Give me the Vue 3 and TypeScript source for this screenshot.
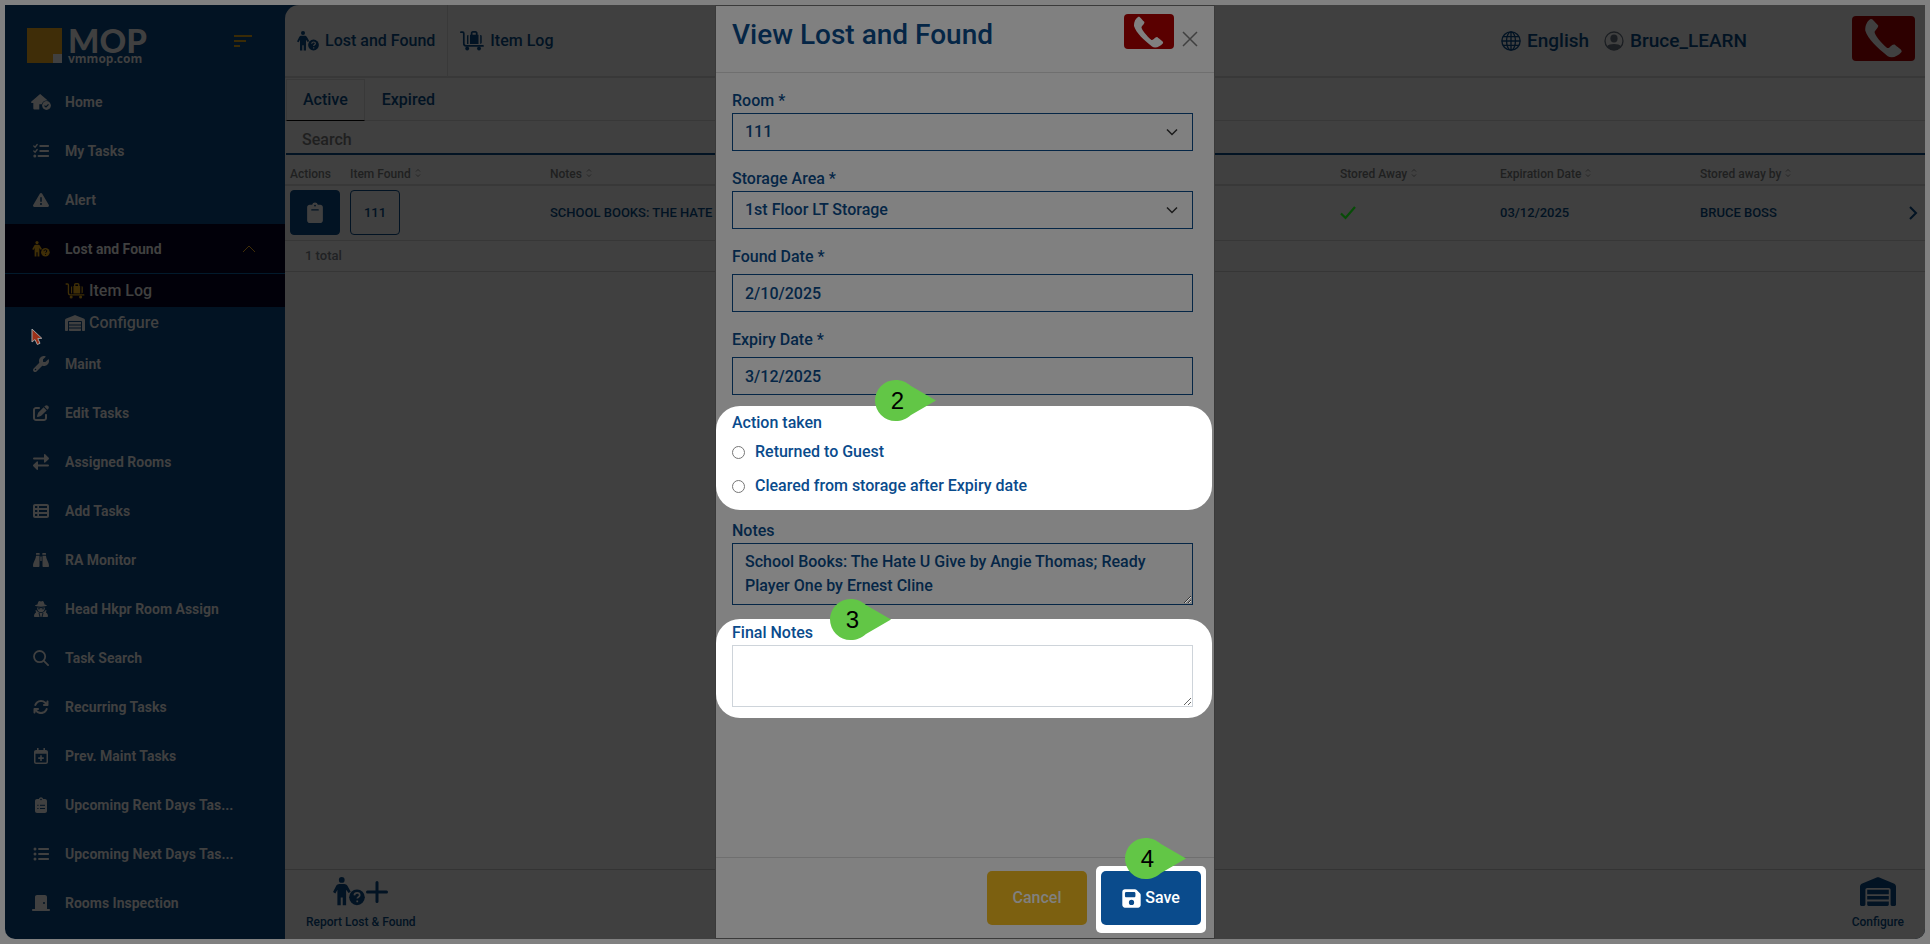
<script setup lang="ts">
import { ref } from 'vue'

interface NavItem {
  label: string
  icon: string
}

const navTop: NavItem[] = [
  { label: 'Home', icon: 'home' },
  { label: 'My Tasks', icon: 'checks' },
  { label: 'Alert', icon: 'alert' },
]

const navRest: NavItem[] = [
  { label: 'Maint', icon: 'wrench' },
  { label: 'Edit Tasks', icon: 'edit' },
  { label: 'Assigned Rooms', icon: 'swap' },
  { label: 'Add Tasks', icon: 'table' },
  { label: 'RA Monitor', icon: 'binoculars' },
  { label: 'Head Hkpr Room Assign', icon: 'agent' },
  { label: 'Task Search', icon: 'search' },
  { label: 'Recurring Tasks', icon: 'rotate' },
  { label: 'Prev. Maint Tasks', icon: 'calendar' },
  { label: 'Upcoming Rent Days Tas...', icon: 'clipboard-list' },
  { label: 'Upcoming Next Days Tas...', icon: 'list' },
  { label: 'Rooms Inspection', icon: 'door' },
]

const room = ref('111')
const storage = ref('1st Floor LT Storage')
const foundDate = ref('2/10/2025')
const expiryDate = ref('3/12/2025')
const action = ref('')
const notes = ref('School Books: The Hate U Give by Angie Thomas; Ready Player One by Ernest Cline')
const finalNotes = ref('')
const search = ref('')
</script>

<template>
  <svg class="sprite" aria-hidden="true">
    <symbol id="i-home" viewBox="0 0 20 16">
      <path d="M8.500.400a1 1 0 0 1 1.300 0l7 6.200c-2.800-.6-5.300 1-6 3.600H8.300v5.300H3.300a1 1 0 0 1-1-1V9H1A1 1 0 0 1 .400 7.400z" />
      <circle cx="15.500" cy="11.500" r="4.400" />
      <path d="m13.500 11.600 1.500 1.400 2.500-2.700" fill="none" stroke="var(--cut)" stroke-width="1.200" />
    </symbol>
    <symbol id="i-checks" viewBox="0 0 16 16">
      <g fill="none" stroke="currentColor" stroke-linecap="round">
        <path d="M7.200 3h8M7.200 8h8M5.500 13h9.700" stroke-width="1.900" />
        <path d="m.8 3 1.300 1.200L4.200 1.500M.8 8l1.300 1.200L4.200 6.500" stroke-width="1.300" />
      </g>
      <circle cx="1.800" cy="13" r="1.500" />
    </symbol>
    <symbol id="i-alert" viewBox="0 0 512 512">
      <path d="M256 32c14.200 0 27.300 7.500 34.500 19.800l216 368c7.300 12.400 7.300 27.700 .2 40.100S486.300 480 472 480L40 480c-14.300 0-27.600-7.700-34.700-20.100s-7-27.800 .2-40.100l216-368C228.700 39.500 241.800 32 256 32zm0 128c-13.300 0-24 10.700-24 24l0 112c0 13.300 10.700 24 24 24s24-10.700 24-24l0-112c0-13.300-10.700-24-24-24zm32 224a32 32 0 1 0 -64 0 32 32 0 1 0 64 0z" />
    </symbol>
    <symbol id="i-person" viewBox="0 0 22 20">
      <circle cx="6" cy="2" r="2" />
      <path d="M4.300 4.800h3.400c1 0 1.700.5 2.200 1.300l2.300 4-1.500 1-1.700-2.300v10.700H6.700v-5.300H5.300v5.300H3V8.800l-1.400 2.500L0 10.400l2.200-4.300c.5-.8 1.200-1.300 2.100-1.300z" />
      <circle cx="16.500" cy="14" r="5.400" />
      <path d="M14.700 12.700c.1-1.200 1-1.700 1.900-1.700 1 0 1.800.6 1.800 1.500 0 1.300-1.700 1.200-1.700 2.400M16.700 16.200v1.200" fill="none" stroke="var(--cut)" stroke-width="1.200" />
    </symbol>
    <symbol id="i-cart" viewBox="0 0 24 20">
      <path d="M.9 1.200h1.700c.8 0 1.200.5 1.200 1.200v10.200c0 1.500.7 2.300 2.200 2.300h17" fill="none" stroke="currentColor" stroke-width="1.700" stroke-linecap="round" />
      <circle cx="7.200" cy="17.500" r="1.900" />
      <circle cx="19" cy="17.500" r="1.900" />
      <path d="M7 5.200C7 4.400 7.500 4 8.400 4v9H7.600c-.4 0-.6-.3-.6-.6zM20.200 4c.9 0 1.500.5 1.500 1.300v6.300c0 .9-.6 1.400-1.500 1.400z" />
      <path fill-rule="evenodd" d="M10 3.800h.8V2.200C10.800 1 11.600 0 12.900 0h2.500c1.300 0 2.200 1 2.200 2.200v1.600h.9V13H10zM12.500 3.800h3.300v-2h-3.300z" />
    </symbol>
    <symbol id="i-warehouse" viewBox="0 0 640 512">
      <path d="M0 488L0 171.300c0-26.200 15.900-49.700 40.200-59.400L308.100 4.800c7.600-3.100 16.100-3.100 23.800 0L599.800 111.900c24.300 9.700 40.200 33.300 40.200 59.400L640 488c0 13.300-10.700 24-24 24l-48 0c-13.300 0-24-10.700-24-24l0-264c0-17.700-14.300-32-32-32l-384 0c-17.700 0-32 14.300-32 32l0 264c0 13.300-10.700 24-24 24l-48 0c-13.300 0-24-10.700-24-24zm488 24l-336 0c-13.300 0-24-10.700-24-24l0-56 384 0 0 56c0 13.300-10.700 24-24 24zM128 400l0-64 384 0 0 64-384 0zm0-96l0-80 384 0 0 80-384 0z" />
    </symbol>
    <symbol id="i-wrench" viewBox="0 0 512 512">
      <path d="M352 320c88.400 0 160-71.600 160-160c0-15.300-2.200-30.100-6.200-44.200c-3.100-10.800-16.400-13.200-24.300-5.300l-76.800 76.800c-3 3-7.100 4.700-11.300 4.700L336 192c-8.800 0-16-7.200-16-16l0-57.400c0-4.200 1.700-8.300 4.700-11.300l76.800-76.800c7.900-7.900 5.400-21.200-5.300-24.300C382.100 2.200 367.300 0 352 0C263.600 0 192 71.600 192 160c0 19.100 3.400 37.500 9.500 54.500L19.900 396.100C7.200 408.800 0 426.100 0 444.100C0 481.600 30.400 512 67.900 512c18 0 35.300-7.200 48-19.900L297.500 310.500c17 6.200 35.400 9.500 54.500 9.500zM80 408a24 24 0 1 1 0 48 24 24 0 1 1 0-48z" />
    </symbol>
    <symbol id="i-edit" viewBox="0 0 512 512">
      <path d="M471.600 21.700c-21.900-21.900-57.300-21.900-79.200 0L362.300 51.700l97.900 97.900 30.100-30.100c21.900-21.900 21.900-57.300 0-79.200L471.600 21.700zm-299.200 220c-6.100 6.100-10.800 13.600-13.500 21.900l-29.600 88.800c-2.900 8.600-.6 18.100 5.800 24.600s15.900 8.700 24.600 5.800l88.800-29.600c8.200-2.700 15.700-7.400 21.900-13.500L437.700 172.300 339.700 74.300 172.400 241.700zM96 64C43 64 0 107 0 160L0 416c0 53 43 96 96 96l256 0c53 0 96-43 96-96l0-96c0-17.700-14.300-32-32-32s-32 14.300-32 32l0 96c0 17.700-14.300 32-32 32L96 448c-17.700 0-32-14.300-32-32l0-256c0-17.700 14.300-32 32-32l96 0c17.700 0 32-14.300 32-32s-14.300-32-32-32L96 64z" />
    </symbol>
    <symbol id="i-swap" viewBox="0 0 16 16">
      <path d="M1 4.500h10M5 11.500h10" fill="none" stroke="currentColor" stroke-width="2" stroke-linecap="round" />
      <path d="M11 .8c0-.7.700-.9 1.200-.5l3.500 3.500c.4.400.4 1 0 1.400l-3.500 3.400c-.5.400-1.200.2-1.200-.5zM5 15.200c0 .7-.7.900-1.200.5L.3 12.200a1 1 0 0 1 0-1.400l3.500-3.400c.5-.4 1.200-.2 1.200.5z" />
    </symbol>
    <symbol id="i-table" viewBox="0 0 16 16">
      <path fill-rule="evenodd" d="M2 1h12c1.100 0 2 .9 2 2v10c0 1.100-.9 2-2 2H2c-1.100 0-2-.9-2-2V3c0-1.100.9-2 2-2zm0 2v2h2.300V3zm4 0v2h8V3zM2 7v2h2.300V7zm4 0v2h8V7zm-4 4v2h2.300v-2zm4 0v2h8v-2z" />
    </symbol>
    <symbol id="i-binoculars" viewBox="0 0 16 16">
      <path d="M3.500 1h2.700c.3 0 .5.200.5.500v1.200H3V1.500c0-.3.200-.5.500-.5zm6.300 0h2.700c.3 0 .5.200.5.500v1.200H9.300V1.500c0-.3.200-.5.500-.5zM3 3.700h3.500V14c0 .6-.4 1-1 1H1c-.6 0-1-.4-1-1 0-4 2.700-6 3-10.300zm6.500 0H13c.3 4.300 3 6.300 3 10.300 0 .6-.4 1-1 1h-4.500c-.6 0-1-.4-1-1zM7.300 4.500h1.400V9H7.300z" />
    </symbol>
    <symbol id="i-agent" viewBox="0 0 14 16">
      <path d="M3.400 3.600C3.800 1.700 4.600 0 5.400 0c.6 0 1 .5 1.600.5S8 0 8.600 0c.8 0 1.600 1.700 2 3.600 1.300.3 2.400.6 2.400 1s-2.600 1.100-6 1.100-6-.6-6-1.100.9-.7 2.400-1z" />
      <path d="M3.200 6.500c2.300.6 5.300.6 7.600 0v1c0 2.200-1.700 3.700-3.800 3.700S3.200 9.700 3.200 7.500z" />
      <path d="M1.400 9.300h1.300c.6 1.500 2 2.600 4.300 2.600s3.700-1.100 4.300-2.600h1.300l-.7 2.200c1.300.6 2.100 2 2.100 3.500 0 .6-.4 1-1 1H1c-.6 0-1-.4-1-1 0-1.500.8-2.900 2.100-3.500z" />
      <path d="M4 7.800h2.300M7.700 7.800H10M5 12l1 4M9 12l-1 4" fill="none" stroke="var(--cut)" stroke-width=".9" />
    </symbol>
    <symbol id="i-search" viewBox="0 0 16 16">
      <g fill="none" stroke="currentColor" stroke-width="1.800" stroke-linecap="round">
        <circle cx="6.600" cy="6.600" r="5.600" />
        <path d="m10.800 10.800 4.300 4.300" />
      </g>
    </symbol>
    <symbol id="i-rotate" viewBox="0 0 512 512">
      <path d="M105.100 202.600c7.700-21.800 20.200-42.300 37.800-59.800c62.500-62.500 163.800-62.500 226.300 0L386.300 160 352 160c-17.700 0-32 14.300-32 32s14.300 32 32 32l111.500 0l.4 0c17.700 0 32-14.300 32-32l0-112c0-17.700-14.300-32-32-32s-32 14.300-32 32l0 35.200L414.400 97.600c-87.500-87.500-229.300-87.500-316.800 0C73.200 122 55.600 150.700 44.800 181.400c-5.900 16.700 2.900 34.900 19.500 40.800s34.900-2.900 40.800-19.500zM39 289.300c-5 1.500-9.800 4.200-13.700 8.200c-4 4-6.700 8.800-8.100 14c-.3 1.200-.6 2.500-.8 3.800c-.3 1.700-.4 3.400-.4 5.100L16 432c0 17.700 14.300 32 32 32s32-14.300 32-32l0-35.100 17.600 17.500c87.500 87.400 229.300 87.400 316.700 0c24.400-24.400 42.100-53.100 52.900-83.800c5.900-16.700-2.900-34.900-19.500-40.800s-34.900 2.900-40.800 19.500c-7.700 21.800-20.200 42.300-37.800 59.800c-62.500 62.500-163.800 62.500-226.300 0l-.1-.1L125.600 352l34.400 0c17.700 0 32-14.300 32-32s-14.300-32-32-32L48.400 288c-1.600 0-3.200 .1-4.800 .3s-3.100 .5-4.600 1z" />
    </symbol>
    <symbol id="i-calendar" viewBox="0 0 16 16">
      <path fill-rule="evenodd" d="M4 0h1.600v2h4.800V0H12v2h1c1.100 0 2 .9 2 2v10c0 1.100-.9 2-2 2H3c-1.100 0-2-.9-2-2V4c0-1.100.9-2 2-2h1zM2.500 5.800V14c0 .3.200.5.500.5h10c.3 0 .5-.2.500-.5V5.800z" />
      <path d="M8 7.300v5.600M5.200 10.100h5.600" fill="none" stroke="currentColor" stroke-width="1.600" />
    </symbol>
    <symbol id="i-clipboard-list" viewBox="0 0 12 16">
      <path d="M2 2h1.800a2.300 2.300 0 0 1 4.400 0H10c1.100 0 2 .9 2 2v10c0 1.100-.9 2-2 2H2c-1.100 0-2-.9-2-2V4c0-1.100.9-2 2-2z" />
      <circle cx="6" cy="2.500" r=".8" fill="var(--cut)" />
      <path d="M2.300 8.300h1.200M5 8.300h5M2.300 11.500h1.200M5 11.500h5" stroke="var(--cut)" stroke-width="1" />
    </symbol>
    <symbol id="i-clipboard" viewBox="0 0 12 16">
      <path d="M2 2h1.800a2.300 2.300 0 0 1 4.400 0H10c1.100 0 2 .9 2 2v10c0 1.100-.9 2-2 2H2c-1.100 0-2-.9-2-2V4c0-1.100.9-2 2-2z" />
      <circle cx="6" cy="2.700" r=".7" fill="var(--cut)" />
      <path d="M3.500 6h5" stroke="var(--cut)" stroke-width=".8" stroke-linecap="round" />
    </symbol>
    <symbol id="i-list" viewBox="0 0 16 16">
      <path d="M6 3h9.200M6 8h9.200M6 13h9.200" stroke="currentColor" stroke-width="1.900" stroke-linecap="round" />
      <circle cx="2" cy="3" r="1.500" />
      <circle cx="2" cy="8" r="1.500" />
      <circle cx="2" cy="13" r="1.500" />
    </symbol>
    <symbol id="i-door" viewBox="0 0 18 16">
      <path d="M3 2c0-1.100.9-2 2-2h8c1.100 0 2 .9 2 2v12h2c.600 0 1 .4 1 1s-.4 1-1 1H1c-.6 0-1-.4-1-1s.4-1 1-1h2z" />
      <circle cx="12" cy="8" r="1" fill="var(--cut)" />
    </symbol>
    <symbol id="i-phone" viewBox="11 2 32 32">
      <path d="M16 3c2-1 3 2 6 4.500 1.500 1.500-1.500 3.500-2.500 5.500C19 15 24.500 22 29.500 26c2 .8 3.500-3.500 6-2.800 1.800 2 6.500 4 5.500 6C38 33 33 34.500 30 32.500 22 26 14 19 12 12c-.2-4 1.500-7.500 4-9z" />
    </symbol>
    <symbol id="i-globe" viewBox="0 0 18 18">
      <g fill="none" stroke="currentColor" stroke-width="1.200">
        <circle cx="9" cy="9" r="8.200" />
        <ellipse cx="9" cy="9" rx="4" ry="8.200" />
        <path d="M9 .8v16.400M.8 9h16.400M1.900 5h14.200M1.900 13h14.200" />
      </g>
    </symbol>
    <symbol id="i-user" viewBox="0 0 20 20">
      <circle cx="10" cy="10" r="9" fill="none" stroke="currentColor" stroke-width="1.300" />
      <ellipse cx="10" cy="7.500" rx="3.600" ry="4" />
      <path d="M3 15.500c2-3.200 12-3.200 14 0-3.300 4.600-10.700 4.600-14 0z" />
    </symbol>
    <symbol id="i-save" viewBox="0 0 448 512">
      <path d="M64 32C28.700 32 0 60.700 0 96L0 416c0 35.300 28.700 64 64 64l320 0c35.300 0 64-28.700 64-64l0-242.700c0-17-6.700-33.300-18.700-45.300L352 50.700C340 38.700 323.700 32 306.700 32L64 32zm0 96c0-17.700 14.300-32 32-32l192 0c17.700 0 32 14.300 32 32l0 64c0 17.700-14.300 32-32 32L96 224c-17.700 0-32-14.300-32-32l0-64zM224 288a64 64 0 1 1 0 128 64 64 0 1 1 0-128z" />
    </symbol>
    <symbol id="i-sort" viewBox="0 0 6 10">
      <path d="m1 3.500 2-2 2 2M1 6.500l2 2 2-2" fill="none" stroke="currentColor" stroke-width="1" />
    </symbol>
    <symbol id="i-pin" viewBox="0 0 61 41">
      <path d="M20.500 0C27 0 31 2 36 6l25 14.500L36 35c-5 4-9 6-15.500 6a20.500 20.500 0 0 1 0-41z" />
    </symbol>
  </svg>

  <div class="frame">
    <div class="shell">
      <aside class="sidebar">
        <div class="brand">
          <a href="#" class="logo" aria-label="MOP vmmop.com">
            <span class="logo-mark"><span class="logo-notch"></span></span>
            <span class="logo-text">
              <span class="logo-name">MOP</span>
              <span class="logo-site">vmmop.com</span>
            </span>
          </a>
          <button type="button" class="burger" aria-label="Toggle menu">
            <span class="bar bar-long"></span>
            <span class="bar bar-mid"></span>
            <span class="bar bar-short"></span>
          </button>
        </div>
        <nav>
          <a v-for="item in navTop" :key="item.label" href="#" class="nav-item">
            <svg class="nav-icon"><use :href="'#i-' + item.icon" /></svg>
            <span>{{ item.label }}</span>
          </a>
          <a href="#" class="nav-item nav-open">
            <svg class="nav-icon gold"><use href="#i-person" /></svg>
            <span class="grow">Lost and Found</span>
            <svg class="chev gold" viewBox="0 0 14 8"><path d="m1 7 6-6 6 6" fill="none" stroke="currentColor" /></svg>
          </a>
          <a href="#" class="sub-item sub-active">
            <svg class="sub-icon gold"><use href="#i-cart" /></svg>
            <span>Item Log</span>
          </a>
          <a href="#" class="sub-item">
            <svg class="sub-icon"><use href="#i-warehouse" /></svg>
            <span>Configure</span>
          </a>
          <a v-for="item in navRest" :key="item.label" href="#" class="nav-item">
            <svg class="nav-icon"><use :href="'#i-' + item.icon" /></svg>
            <span>{{ item.label }}</span>
          </a>
        </nav>
      </aside>

      <main class="main">
        <header class="topbar">
          <a href="#" class="crumb crumb-first">
            <svg class="crumb-icon"><use href="#i-person" /></svg>
            <span>Lost and Found</span>
          </a>
          <a href="#" class="crumb">
            <svg class="crumb-icon cart"><use href="#i-cart" /></svg>
            <span>Item Log</span>
          </a>
          <div class="account">
            <button type="button" class="plain">
              <svg class="globe"><use href="#i-globe" /></svg>English
            </button>
            <button type="button" class="plain">
              <svg class="user"><use href="#i-user" /></svg>Bruce_LEARN
            </button>
          </div>
          <button type="button" class="call call-page" aria-label="Call">
            <svg><use href="#i-phone" /></svg>
          </button>
        </header>

        <div class="tabs" role="tablist">
          <button type="button" role="tab" aria-selected="true" class="tab tab-on">Active</button>
          <button type="button" role="tab" aria-selected="false" class="tab">Expired</button>
        </div>

        <input v-model="search" class="search" type="text" placeholder="Search" aria-label="Search" />

        <table class="grid">
          <colgroup>
            <col class="c-actions" />
            <col class="c-item" />
            <col />
            <col class="c-stored" />
            <col class="c-exp" />
            <col class="c-by" />
          </colgroup>
          <thead>
            <tr>
              <th>Actions</th>
              <th>Item Found<svg class="sort"><use href="#i-sort" /></svg></th>
              <th>Notes<svg class="sort"><use href="#i-sort" /></svg></th>
              <th>Stored Away<svg class="sort"><use href="#i-sort" /></svg></th>
              <th>Expiration Date<svg class="sort"><use href="#i-sort" /></svg></th>
              <th>Stored away by<svg class="sort"><use href="#i-sort" /></svg></th>
            </tr>
          </thead>
          <tbody>
            <tr>
              <td>
                <button type="button" class="square square-solid" aria-label="View item">
                  <svg><use href="#i-clipboard" /></svg>
                </button>
              </td>
              <td><button type="button" class="square">111</button></td>
              <td>SCHOOL BOOKS: THE HATE</td>
              <td>
                <svg class="tick" viewBox="0 0 16 14"><path d="m1 7.500 4.500 4.500L15 1" fill="none" stroke="currentColor" stroke-width="2.200" /></svg>
              </td>
              <td>03/12/2025</td>
              <td>
                <div class="by">
                  <span>BRUCE BOSS</span>
                  <svg class="next" viewBox="0 0 9 14"><path d="m1 1 6 6-6 6" fill="none" stroke="currentColor" stroke-width="2" /></svg>
                </div>
              </td>
            </tr>
          </tbody>
          <tfoot>
            <tr><td colspan="6" class="total">1 total</td></tr>
          </tfoot>
        </table>

        <footer class="dock">
          <button type="button" class="dock-btn">
            <span class="dock-icons">
              <svg class="dock-person"><use href="#i-person" /></svg>
              <svg class="dock-plus" viewBox="0 0 22 22"><path d="M11 1.500v19M1.500 11h19" stroke="currentColor" stroke-width="3" stroke-linecap="round" /></svg>
            </span>
            Report Lost &amp; Found
          </button>
          <button type="button" class="dock-btn">
            <span class="dock-icons"><svg class="dock-house"><use href="#i-warehouse" /></svg></span>
            Configure
          </button>
        </footer>
      </main>
    </div>

    <section class="modal" role="dialog" aria-labelledby="modal-title">
      <header class="modal-head">
        <h1 id="modal-title">View Lost and Found</h1>
        <button type="button" class="call call-modal" aria-label="Call">
          <svg><use href="#i-phone" /></svg>
        </button>
        <button type="button" class="close" aria-label="Close">
          <svg viewBox="0 0 16 16"><path d="m1 1 14 14M15 1 1 15" stroke="currentColor" stroke-width="1.500" /></svg>
        </button>
      </header>

      <form id="item-form" class="form" @submit.prevent>
        <div class="field">
          <label for="room">Room *</label>
          <div class="select">
            <select id="room" v-model="room"><option>111</option></select>
            <svg viewBox="0 0 12 8"><path d="m1 1.500 5 5 5-5" fill="none" stroke="currentColor" stroke-width="1.500" /></svg>
          </div>
        </div>
        <div class="field">
          <label for="storage">Storage Area *</label>
          <div class="select">
            <select id="storage" v-model="storage"><option>1st Floor LT Storage</option></select>
            <svg viewBox="0 0 12 8"><path d="m1 1.500 5 5 5-5" fill="none" stroke="currentColor" stroke-width="1.500" /></svg>
          </div>
        </div>
        <div class="field date">
          <label for="found">Found Date *</label>
          <input id="found" v-model="foundDate" type="text" />
        </div>
        <div class="field date">
          <label for="expiry">Expiry Date *</label>
          <input id="expiry" v-model="expiryDate" type="text" />
        </div>

        <fieldset class="spot spot-action" aria-labelledby="action-title">
          <span id="action-title" class="title">Action taken</span>
          <label class="option"><input v-model="action" type="radio" name="action" value="returned" />Returned to Guest</label>
          <label class="option"><input v-model="action" type="radio" name="action" value="cleared" />Cleared from storage after Expiry date</label>
          <span class="pin pin-2"><svg><use href="#i-pin" /></svg><span>2</span></span>
        </fieldset>

        <div class="field notes">
          <label for="notes">Notes</label>
          <textarea id="notes" v-model="notes"></textarea>
        </div>

        <div class="spot spot-final">
          <label for="final" class="title">Final Notes</label>
          <textarea id="final" v-model="finalNotes"></textarea>
          <span class="pin pin-3"><svg><use href="#i-pin" /></svg><span>3</span></span>
        </div>
      </form>

      <footer class="modal-foot">
        <button type="button" class="btn btn-cancel">Cancel</button>
        <div class="spot-save">
          <button type="submit" form="item-form" class="btn btn-save">
            <svg><use href="#i-save" /></svg>Save
          </button>
          <span class="pin pin-4"><svg><use href="#i-pin" /></svg><span>4</span></span>
        </div>
      </footer>
    </section>

    <svg class="cursor" viewBox="0 0 12 18">
      <path d="M1 1v13l3-2.500 2.300 5 2.700-1.200-2.200-4.800 4-.2z" fill="#9c3018" stroke="#a0a0a0" />
    </svg>
  </div>
</template>

<style>
html,
body {
  background: #808080;
}
</style>

<style scoped>
* {
  box-sizing: border-box;
}
.sprite {
  display: none;
}
svg {
  display: block;
  flex: none;
  fill: currentColor;
}
button,
input,
select,
textarea {
  font: inherit;
  color: inherit;
  margin: 0;
}
button {
  border: 0;
  padding: 0;
  background: none;
}
a {
  color: inherit;
  text-decoration: none;
}
.frame {
  --cut: #404040;
  position: relative;
  display: flex;
  min-height: 100vh;
  padding: 5px;
  font: 500 16px/20px Roboto, 'Liberation Sans', sans-serif;
  color: #021323;
}
.shell {
  flex: 1;
  display: flex;
  overflow: hidden;
  background: #021323;
  border-radius: 0 0 10px 10px;
}

/* Sidebar */
.sidebar {
  --cut: #021323;
  width: 280px;
  flex: none;
  color: #404040;
}
.brand {
  height: 72px;
  padding: 0 33px 0 22px;
  display: flex;
  align-items: center;
  justify-content: space-between;
}
.logo {
  display: flex;
  gap: 6px;
  margin-top: 10px;
}
.logo-mark {
  width: 35px;
  height: 35px;
  display: flex;
  align-items: flex-end;
  justify-content: flex-end;
  background: #3f2d08;
}
.logo-notch {
  width: 9px;
  height: 9px;
  background: #404040;
}
.logo-text {
  display: flex;
  flex-direction: column;
}
.logo-name {
  font: 900 33px/25px Lato, sans-serif;
}
.logo-site {
  font: 700 12px/12px 'Open Sans', sans-serif;
}
.burger {
  display: flex;
  flex-direction: column;
  gap: 3px;
}
.bar {
  height: 2px;
  background: #3a2b06;
}
.bar-long {
  width: 18px;
}
.bar-mid {
  width: 12px;
}
.bar-short {
  width: 6px;
}
.gold {
  color: #3f2e07;
}
.nav-item {
  display: flex;
  align-items: center;
  height: 49px;
  padding-left: 26px;
  gap: 14px;
  font-size: 14px;
  font-weight: 700;
}
.nav-icon {
  width: 20px;
  height: 16px;
}
.nav-open {
  --cut: #010009;
  height: 50px;
  background: #010009;
  border-bottom: 1px solid #021a2c;
  padding-right: 29px;
}
.grow {
  flex: 1;
}
.chev {
  width: 14px;
  height: 8px;
}
.sub-item {
  display: flex;
  align-items: center;
  gap: 4px;
  height: 32px;
  padding-left: 60px;
}
.sub-active {
  --cut: #010009;
  height: 33px;
  background: #010009;
}
.sub-icon {
  width: 20px;
  height: 16px;
}

/* Page */
.main {
  flex: 1;
  min-width: 0;
  display: flex;
  flex-direction: column;
  background: #404040;
  border-top-left-radius: 14px;
}
.topbar {
  display: flex;
  align-items: center;
  height: 73px;
  border-bottom: 2px solid #383838;
}
.crumb {
  display: flex;
  align-items: center;
  gap: 6px;
  height: 72px;
  padding: 0 12px;
}
.crumb-first {
  border-right: 1px solid #393939;
}
.crumb-icon {
  width: 22px;
  height: 20px;
}
.cart {
  width: 24px;
}
.account {
  display: flex;
  gap: 15px;
  margin-left: auto;
  margin-right: 105px;
  font-size: 19px;
}
.plain {
  display: flex;
  align-items: center;
  gap: 6px;
}
.globe {
  width: 20px;
  height: 20px;
}
.user {
  width: 20px;
  height: 20px;
  color: #1b1e22;
}
.call {
  display: flex;
  justify-content: center;
  align-items: center;
  border-radius: 4px;
}
.call-page {
  width: 63px;
  height: 45px;
  margin: 0 10px 5px 0;
  background: #2d0000;
  color: #404040;
}
.call-page svg {
  width: 40px;
  height: 40px;
}
.tabs {
  display: flex;
  height: 43px;
  padding: 1px 0 0 1px;
  border-bottom: 1px solid #383838;
}
.tab {
  padding: 0 17px;
}
.tab-on {
  border: 1px solid #393939;
  border-bottom-color: #000;
  padding: 0 16px;
  margin-bottom: -1px;
}
.search {
  height: 34px;
  padding: 4px 16px 0;
  margin-left: 1px;
  border: 0;
  border-bottom: 2px solid #021323;
  background: none;
  outline: none;
}
.search::placeholder {
  color: #1f1f1f;
  opacity: 1;
}
.grid {
  width: 100%;
  table-layout: fixed;
  border-collapse: collapse;
  font-size: 13px;
  border-bottom: 1px solid #363636;
}
.c-actions {
  width: 62px;
}
.c-item {
  width: 200px;
}
.c-stored {
  width: 160px;
}
.c-exp {
  width: 200px;
}
.c-by {
  width: 228px;
}
th {
  height: 30px;
  padding: 8px 0 0 3px;
  text-align: left;
  font-size: 12px;
  font-weight: 500;
  color: #1f2020;
  border-bottom: 2px solid #383838;
}
td {
  padding: 0 0 0 3px;
}
th:first-child,
td:first-child {
  padding-left: 5px;
}
tbody td {
  height: 55px;
  border-bottom: 1px solid #373737;
}
.sort {
  display: inline-block;
  width: 6px;
  height: 10px;
  margin-left: 4px;
  color: #262626;
}
.square {
  width: 50px;
  height: 45px;
  display: flex;
  align-items: center;
  justify-content: center;
  border: 1px solid #021323;
  border-radius: 4px;
}
.square-solid {
  --cut: #021323;
  background: #021323;
  color: #404040;
}
.square-solid svg {
  width: 16px;
  height: 21px;
}
.tick {
  width: 16px;
  height: 14px;
  color: #074c07;
}
.by {
  display: flex;
  align-items: center;
  justify-content: space-between;
  padding-right: 7px;
}
.next {
  width: 9px;
  height: 14px;
}
.grid .total {
  height: 31px;
  padding-left: 20px;
  color: #202224;
}
.dock {
  margin-top: auto;
  height: 70px;
  display: flex;
  justify-content: space-between;
  padding: 7px 21px;
  border-top: 1px solid #343434;
  font-size: 12px;
}
.dock-btn {
  display: flex;
  flex-direction: column;
  align-items: center;
  justify-content: space-between;
}
.dock-icons {
  display: flex;
  align-items: center;
  gap: 1px;
}
.dock-person {
  width: 32px;
  height: 29px;
}
.dock-plus {
  width: 22px;
  height: 24px;
}
.dock-house {
  width: 36px;
  height: 29px;
}

/* Dialog floats above the page */
.modal {
  position: absolute;
  top: 5px;
  bottom: 5px;
  left: 0;
  right: 0;
  margin: 0 auto;
  width: 500px;
  max-width: 100%;
  display: flex;
  flex-direction: column;
  border: 1px solid #3a3a3a;
  background: #808080;
  color: #052646;
}
.modal-head {
  display: flex;
  align-items: flex-start;
  height: 67px;
  padding: 8px 16px 0;
  border-bottom: 1px solid #6f6f6f;
}
h1 {
  flex: 1;
  margin: 4px 0 0;
  font-size: 28px;
  line-height: 34px;
  font-weight: 500;
}
.call-modal {
  width: 50px;
  height: 35px;
  background: #5a0000;
  color: #808080;
}
.call-modal svg {
  width: 32px;
  height: 32px;
}
.close {
  margin: 17px 0 0 8px;
  color: #404040;
}
.close svg {
  width: 16px;
  height: 16px;
}
.form {
  display: flex;
  flex-direction: column;
  flex: 1;
  padding-top: 18px;
}
.field {
  display: flex;
  flex-direction: column;
  gap: 2px;
  margin: 0 21px 18px 16px;
}
.date {
  gap: 7px;
}
.select {
  position: relative;
}
.select svg {
  position: absolute;
  right: 15px;
  top: 15px;
  width: 12px;
  height: 8px;
  color: #1a1a1a;
  pointer-events: none;
}
select,
.field input,
textarea {
  width: 100%;
  height: 38px;
  padding: 0 12px;
  border: 1px solid #052646;
  border-radius: 0;
  background: transparent;
  appearance: none;
  outline: none;
}
textarea {
  display: block;
  height: 62px;
  padding: 6px 12px;
  line-height: 24px;
  resize: both;
  overflow: hidden;
}
.spot {
  position: relative;
  display: flex;
  flex-direction: column;
  min-width: 0;
  border: 0;
  border-radius: 24px;
  margin: 0 2px 0 0;
  background: #fff;
  color: #0a4b8c;
}
.spot-action {
  margin-top: -7px;
  margin-bottom: 11px;
  padding: 7px 19px 12px 16px;
}
.title {
  display: block;
}
.option {
  display: flex;
  align-items: center;
  gap: 10px;
  height: 24px;
  margin-top: 7px;
}
.option + .option {
  margin-top: 10px;
}
.option input {
  width: 13px;
  height: 13px;
  accent-color: #0a4b8c;
}
.notes {
  margin-bottom: 14px;
}
.spot-final {
  padding: 4px 19px 11px 16px;
}
.spot-final textarea {
  margin-top: 2px;
  border-color: #ced4da;
}
.modal-foot {
  display: flex;
  justify-content: flex-end;
  align-items: flex-start;
  gap: 9px;
  padding: 8px 8px 5px;
  border-top: 1px solid #6f6f6f;
}
.spot-save {
  position: relative;
  padding: 5px 5px 8px;
  border-radius: 5px;
  background: #fff;
}
.btn {
  display: flex;
  align-items: center;
  justify-content: center;
  gap: 4px;
  width: 100px;
  height: 54px;
  border-radius: 5px;
}
.btn-cancel {
  margin-top: 5px;
  background: #7c6010;
  color: #808080;
}
.btn-save {
  background: #0a4b8c;
  color: #fff;
}
.btn-save svg {
  width: 19px;
  height: 21px;
}

/* Numbered step markers */
.pin {
  position: absolute;
  width: 61px;
  height: 41px;
  color: #62c646;
}
.pin svg {
  width: 61px;
  height: 41px;
}
.pin span {
  position: absolute;
  left: 0;
  top: 0;
  width: 45px;
  text-align: center;
  font: 24px/42px 'Liberation Sans', Arial, sans-serif;
  color: #000;
}
.pin-2 {
  left: 159px;
  top: -26px;
}
.pin-3 {
  left: 114px;
  top: -20px;
}
.pin-4 {
  left: 29px;
  top: -28px;
}
.cursor {
  position: absolute;
  left: 31px;
  top: 328px;
  width: 12px;
  height: 18px;
}
</style>
